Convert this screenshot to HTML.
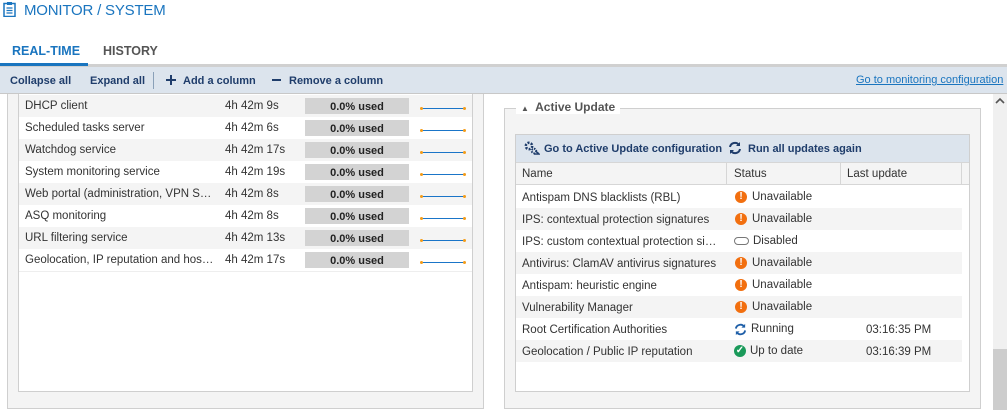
<!DOCTYPE html>
<html><head><meta charset="utf-8"><style>
*{margin:0;padding:0;box-sizing:border-box}
body{width:1007px;height:410px;overflow:hidden;background:#fff;font-family:"Liberation Sans",sans-serif;font-size:11.5px;color:#333;position:relative;white-space:nowrap}
.a{position:absolute}
.title{left:24px;top:2px;font-size:15px;color:#1a75bf;letter-spacing:-.2px}
.tab{top:44px;font-size:12.5px;font-weight:bold}
.tb{left:0;top:67px;width:1007px;height:27px;background:#dce4ed;border-bottom:1px solid #c8c8c8;color:#1f3d6b;font-size:11px;font-weight:bold}
.tb span{position:absolute;top:8px}
.lp{left:7px;top:94px;width:477px;height:315px;background:#f4f4f4;border:1px solid #cfcfcf;border-top:none}
.lt{left:18px;top:94px;width:455px;height:298px;background:#fff;border:1px solid #cfcfcf;border-top:none}
.row{position:absolute;left:19px;width:453px;height:22px}
.row .n{position:absolute;left:6px;top:5px;width:190px;overflow:hidden;text-overflow:ellipsis}
.row .t{position:absolute;left:206px;top:5px}
.row .b{position:absolute;left:286px;top:3px;width:104px;height:16px;background:#d3d3d3;text-align:center;font-weight:bold;color:#222;line-height:18px;font-size:11px}
.row .s{position:absolute;left:402px;top:13px;width:44px;height:1px;background:#1a75c8}
.row .s:before,.row .s:after{content:"";position:absolute;top:-1px;width:3px;height:3px;border-radius:50%;background:#f39c1a}
.row .s:before{left:-1px}.row .s:after{right:-1px}
.g{background:#f4f4f4}
.fs{left:504px;top:108px;width:477px;height:301px;background:#f4f4f4;border:1px solid #cfcfcf}
.leg{left:516px;top:100px;background:#fff;padding:0 5px;font-size:12px;font-weight:bold;color:#555}
.ib{left:515px;top:134px;width:455px;height:258px;background:#fff;border:1px solid #cfcfcf}
.itb{left:516px;top:135px;width:453px;height:27px;background:#dce4ed;color:#1f3d6b;font-weight:bold;font-size:11px}
.hd{left:516px;top:162px;width:453px;height:23px;background:#f4f4f4;border-top:1px solid #d6d6d6;border-bottom:1px solid #d6d6d6}
.r2{position:absolute;left:516px;width:446px;height:22px}
.r2 .n{position:absolute;left:6px;top:6px;width:196px;overflow:hidden;text-overflow:ellipsis}
.r2 .st{position:absolute;left:219px;top:0;height:22px;display:flex;align-items:center}
.r2 .lu{position:absolute;left:350px;top:6px}
.ex{display:inline-block;width:12px;height:12px;border-radius:50%;background:#f26f0f;color:#fff;font-weight:bold;font-size:10px;text-align:center;line-height:12px;margin-right:5px}
.sb{left:993px;top:94px;width:14px;height:316px;background:#f0f0f0}
</style></head><body>
<svg class="a" style="left:3px;top:2px" width="13" height="15" viewBox="0 0 13 15"><rect x="1" y="1.5" width="11" height="13" fill="none" stroke="#1a75bf" stroke-width="1.5"/><rect x="4" y="0" width="5" height="3" fill="#1a75bf"/><path d="M3.5 6h6M3.5 8.5h6M3.5 11h6" stroke="#1a75bf" stroke-width="1.2"/></svg>
<div class="a title">MONITOR / SYSTEM</div>
<div class="a tab" style="left:12px;color:#1a75bf">REAL-TIME</div>
<div class="a tab" style="left:103px;color:#555">HISTORY</div>
<div class="a" style="left:0;top:64px;width:1007px;height:3px;background:#d0d0d0"></div>
<div class="a" style="left:0;top:63px;width:88px;height:3px;background:#1a75bf"></div>
<div class="a tb"><span style="left:10px">Collapse all</span><span style="left:90px">Expand all</span>
<span style="left:153px;top:5px;width:1px;height:17px;background:#8aa0b8"></span>
<svg style="position:absolute;left:166px;top:8px" width="10" height="10"><path d="M5 0v10M0 5h10" stroke="#1f3d6b" stroke-width="2"/></svg><span style="left:183px">Add a column</span>
<svg style="position:absolute;left:272px;top:8px" width="9" height="10"><path d="M0 5h9" stroke="#1f3d6b" stroke-width="2"/></svg><span style="left:289px">Remove a column</span>
<span style="left:856px;top:7px;font-weight:normal;color:#1a75bf;text-decoration:underline;font-size:11px">Go to monitoring configuration</span></div>
<div class="a lp"></div><div class="a lt"></div>
<div class="row g" style="top:95px"><span class="n">DHCP client</span><span class="t">4h 42m 9s</span><span class="b">0.0% used</span><span class="s"></span></div>
<div class="row" style="top:117px"><span class="n">Scheduled tasks server</span><span class="t">4h 42m 6s</span><span class="b">0.0% used</span><span class="s"></span></div>
<div class="row g" style="top:139px"><span class="n">Watchdog service</span><span class="t">4h 42m 17s</span><span class="b">0.0% used</span><span class="s"></span></div>
<div class="row" style="top:161px"><span class="n">System monitoring service</span><span class="t">4h 42m 19s</span><span class="b">0.0% used</span><span class="s"></span></div>
<div class="row g" style="top:183px"><span class="n">Web portal (administration, VPN SSL portal)</span><span class="t">4h 42m 8s</span><span class="b">0.0% used</span><span class="s"></span></div>
<div class="row" style="top:205px"><span class="n">ASQ monitoring</span><span class="t">4h 42m 8s</span><span class="b">0.0% used</span><span class="s"></span></div>
<div class="row g" style="top:227px"><span class="n">URL filtering service</span><span class="t">4h 42m 13s</span><span class="b">0.0% used</span><span class="s"></span></div>
<div class="row" style="top:249px;border-bottom:1px solid #eee;height:23px"><span class="n">Geolocation, IP reputation and host resolution</span><span class="t">4h 42m 17s</span><span class="b">0.0% used</span><span class="s"></span></div>
<div class="a fs"></div>
<div class="a leg"><span style="font-size:8px;color:#555">▲</span>&nbsp; Active Update</div>
<div class="a ib"></div>
<div class="a itb">
<svg class="a" style="left:8px;top:6px" width="16" height="15" viewBox="0 0 16 15"><circle cx="5" cy="5" r="3.2" fill="none" stroke="#1f3d6b" stroke-width="2.5" stroke-dasharray="2 1.3"/><circle cx="10" cy="10" r="2.2" fill="none" stroke="#1f3d6b" stroke-width="2" stroke-dasharray="1.5 1"/><path d="M10 13h5l-2-2" fill="none" stroke="#1f3d6b" stroke-width="1.5"/></svg>
<span class="a" style="left:28px;top:8px">Go to Active Update configuration</span>
<svg class="a" style="left:212px;top:6px" width="14" height="14" viewBox="0 0 14 14"><path d="M2 6a5 5 0 0 1 9-2M12 8a5 5 0 0 1-9 2" fill="none" stroke="#1f3d6b" stroke-width="2"/><path d="M12 1v4H8zM2 13V9h4z" fill="#1f3d6b"/></svg>
<span class="a" style="left:232px;top:8px">Run all updates again</span></div>
<div class="a hd"><span class="a" style="left:6px;top:5px">Name</span><span class="a" style="left:210px;top:0;width:1px;height:22px;background:#d6d6d6"></span><span class="a" style="left:218px;top:5px">Status</span><span class="a" style="left:324px;top:0;width:1px;height:22px;background:#d6d6d6"></span><span class="a" style="left:331px;top:5px">Last update</span><span class="a" style="left:445px;top:0;width:1px;height:22px;background:#d6d6d6"></span></div>
<div class="r2" style="top:186px"><span class="n">Antispam DNS blacklists (RBL)</span><span class="st"><span class="ex">!</span>Unavailable</span></div>
<div class="r2 g" style="top:208px"><span class="n">IPS: contextual protection signatures</span><span class="st"><span class="ex">!</span>Unavailable</span></div>
<div class="r2" style="top:230px"><span class="n">IPS: custom contextual protection signatures</span><span class="st" style="left:218px"><span style="display:inline-block;width:15px;height:8px;border:1px solid #777;border-radius:4px;margin-right:4px"></span>Disabled</span></div>
<div class="r2 g" style="top:252px"><span class="n">Antivirus: ClamAV antivirus signatures</span><span class="st"><span class="ex">!</span>Unavailable</span></div>
<div class="r2" style="top:274px"><span class="n">Antispam: heuristic engine</span><span class="st"><span class="ex">!</span>Unavailable</span></div>
<div class="r2 g" style="top:296px"><span class="n">Vulnerability Manager</span><span class="st"><span class="ex">!</span>Unavailable</span></div>
<div class="r2" style="top:318px"><span class="n">Root Certification Authorities</span><span class="st" style="left:218px"><svg width="13" height="13" viewBox="0 0 14 14" style="margin-right:4px"><path d="M2 6a5 5 0 0 1 9-2M12 8a5 5 0 0 1-9 2" fill="none" stroke="#1f5fa8" stroke-width="2"/><path d="M12 1v4H8zM2 13V9h4z" fill="#1f5fa8"/></svg>Running</span><span class="lu">03:16:35 PM</span></div>
<div class="r2 g" style="top:340px"><span class="n">Geolocation / Public IP reputation</span><span class="st" style="left:218px"><span class="ex" style="background:#1a9a5a;margin-right:4px">✓</span>Up to date</span><span class="lu">03:16:39 PM</span></div>
<div class="a sb"></div>
<svg class="a" style="left:995px;top:97px" width="10" height="8"><path d="M1 6l4-4 4 4" fill="none" stroke="#555" stroke-width="1.6"/></svg>
<div class="a" style="left:993px;top:349px;width:14px;height:61px;background:#cdcdcd"></div>
</body></html>
